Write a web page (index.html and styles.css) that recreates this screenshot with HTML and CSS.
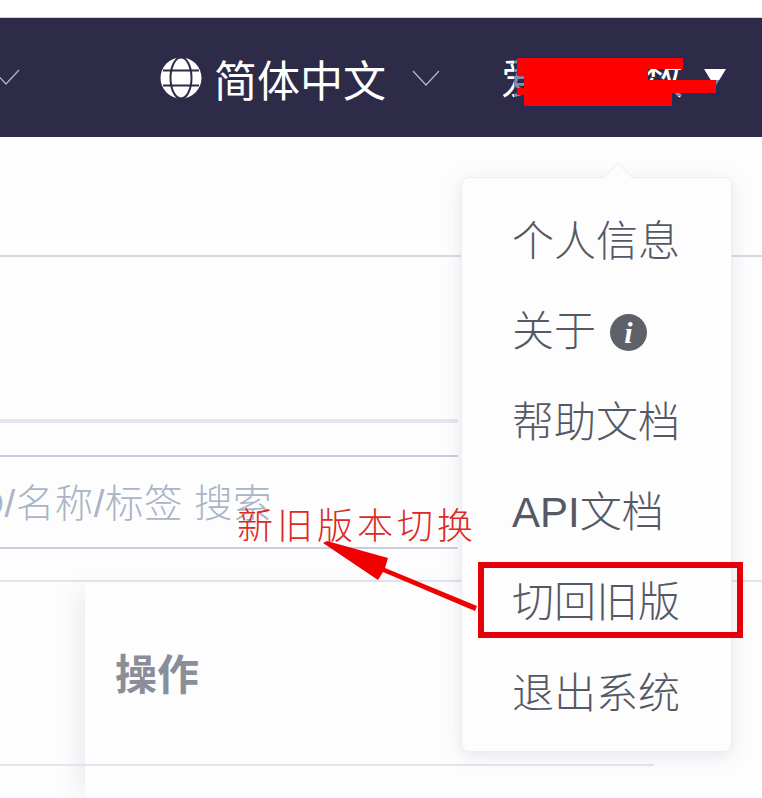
FILE: index.html
```html
<!DOCTYPE html>
<html lang="zh-CN">
<head>
<meta charset="utf-8">
<title>切回旧版</title>
<link rel="stylesheet" href="styles.css">
</head>
<body>
<div class="page">
  <div class="topstrip"></div>
  <header class="navbar">
    <svg class="chev chev-left" viewBox="0 0 28 16"><path d="M1 1 L14 15 L27 1"/></svg>
    <div class="lang">
      <svg class="globe" viewBox="0 0 42 42">
        <circle cx="21" cy="21" r="20.5" fill="#fff"/>
        <g fill="none" stroke="#2d2b47" stroke-width="2">
          <ellipse cx="21" cy="21" rx="10.5" ry="20.5"/>
          <path d="M3 13.5 H39 M3 28.5 H39"/>
        </g>
      </svg>
      <span class="lang-text">简体中文</span>
      <svg class="chev" viewBox="0 0 28 16"><path d="M1 1 L14 15 L27 1"/></svg>
    </div>
    <div class="user">
      <span class="user-name"><span>爱</span><span>数</span></span>
      <span class="caret"></span>
    </div>
  </header>
  <main class="content">
    <div class="rule rule-a"></div>
    <div class="band"></div>
    <div class="search"><span class="placeholder">ID/名称/标签 搜索</span></div>
    <div class="table-top"></div>
    <div class="fixed-col">
      <div class="op-head">操作</div>
      <div class="op-line"></div>
    </div>
    <div class="vline"></div>
  </main>

  <div class="menu">
    <span class="menu-arrow"></span>
    <div class="menu-item">个人信息</div>
    <div class="menu-item">关于<span class="info">i</span></div>
    <div class="menu-item">帮助文档</div>
    <div class="menu-item">API文档</div>
    <div class="menu-item">切回旧版</div>
    <div class="menu-item">退出系统</div>
  </div>

  <svg class="redact" viewBox="0 0 762 798">
    <path fill="#1f2a63" opacity=".55" d="M514 55 H686 V69 H648 V80 H686 H720 V96 H675 V109 H521 V98 H514 Z"/>
    <path fill="#fe0000" d="M517 58 H683 V69 H648 V80 L680 80 H716 V93 H672 V106 H524 V95 H517 V88 H524 V76 H517 Z"/>
  </svg>
  <div class="note">新旧版本切换</div>
  <svg class="arrow" viewBox="0 0 762 798">
    <path fill="#f00000" d="M323 543 L327 541 L388 558 L385 568 L477 606 L475 611 L383 572 L378 580 Z"/>
  </svg>
  <div class="highlight"></div>
</div>
</body>
</html>
```
FILE: styles.css
```css
* { box-sizing: border-box; }
html, body { margin: 0; padding: 0; }
body {
  width: 762px;
  height: 798px;
  overflow: hidden;
  background: #fdfdfe;
  font-family: "Liberation Sans", "Noto Sans CJK SC", sans-serif;
}
.page { position: relative; width: 762px; height: 798px; overflow: hidden; }

.topstrip { height: 18px; background: #fff; border-bottom: 1px solid #d4d4d8; }

.navbar {
  height: 119px;
  background: #2d2b47;
  display: flex;
  align-items: center;
  color: #fff;
}
.chev { width: 28px; height: 16px; flex: none; }
.chev path { fill: none; stroke: #b9b8c4; stroke-width: 1.2; }
.chev-left { margin-left: -8px; margin-top: -2px; }
.lang { display: flex; align-items: center; margin-left: 140px; }
.globe { width: 42px; height: 42px; flex: none; }
.lang-text { font-size: 43px; line-height: 60px; margin: 8px 26px 0 12px; white-space: nowrap; }
.user { display: flex; align-items: center; margin-left: 61px; }
.user-name {
  font-size: 42px;
  line-height: 60px;
  width: 182px;
  margin-right: 20px;
  display: flex;
  justify-content: space-between;
  margin-top: 4px;
}
.caret {
  width: 0; height: 0;
  border-left: 11px solid transparent;
  border-right: 11px solid transparent;
  border-top: 18px solid #fff;
  margin-top: 1px;
  margin-left: 1px;
}

.content { position: relative; height: 661px; }
.rule-a { height: 2px; margin-top: 118px; background: #d6d9e2; }
.band { width: 458px; height: 4px; margin-top: 162px; background: #e1e6f0; }
.search {
  width: 458px;
  height: 94px;
  margin-top: 32px;
  border-top: 2px solid #c5cfe0;
  border-bottom: 2px solid #c5cfe0;
  display: flex;
  align-items: center;
  overflow: hidden;
}
.placeholder {
  font-size: 38.5px;
  letter-spacing: .5px;
  font-weight: 300;
  line-height: 50px;
  color: #aab4c6;
  white-space: nowrap;
  margin-left: -35px;
  margin-top: 4px;
}
.table-top { height: 2px; margin-top: 31px; background: #e3e6ed; }
.fixed-col {
  margin-left: 85px;
  height: 220px;
  background: #fdfdfe;
  box-shadow: -14px 0 22px -8px rgba(120, 125, 150, .14);
  padding-top: 66px;
}
.op-head { font-size: 42px; line-height: 56px; font-weight: 700; color: #8a8e98; margin-left: 30px; }
.op-line { height: 2px; margin-top: 60px; margin-left: -85px; background: #e2e5ec; width: 654px; }
.vline { position: absolute; left: 718px; top: 618px; width: 2px; height: 44px; background: #d4dae6; }

.menu {
  position: absolute;
  left: 461px;
  top: 177px;
  width: 271px;
  height: 575px;
  padding: 19px 0 0 50px;
  background: #fdfdfe;
  border-radius: 8px;
  border: 1px solid #eceef3;
  box-shadow: 0 4px 18px rgba(110, 115, 140, .16);
}
.menu-arrow {
  position: absolute;
  left: 145px;
  top: -11px;
  width: 22px;
  height: 22px;
  background: #fdfdfe;
  transform: rotate(45deg);
  border-left: 1px solid #eceef3;
  border-top: 1px solid #eceef3;
}
.menu-item {
  position: relative;
  height: 90.3px;
  display: flex;
  align-items: center;
  font-size: 42px;
  font-weight: 300;
  line-height: 60px;
  color: #555965;
  white-space: nowrap;
}
.info {
  width: 37px;
  height: 37px;
  margin-left: 14px;
  border-radius: 50%;
  background: #5f6168;
  color: #fff;
  display: flex;
  align-items: center;
  justify-content: center;
  font-family: "Liberation Serif", serif;
  font-style: italic;
  font-weight: 700;
  font-size: 30px;
  line-height: 37px;
}

.redact, .arrow { position: absolute; left: 0; top: 0; width: 762px; height: 798px; pointer-events: none; }
.note {
  position: absolute;
  left: 237px;
  top: 501px;
  font-size: 36px;
  line-height: 52px;
  letter-spacing: 4px;
  font-weight: 300;
  color: #dc2a24;
  white-space: nowrap;
}
.highlight {
  position: absolute;
  left: 478px;
  top: 562px;
  width: 265px;
  height: 76px;
  border: 6px solid #e60008;
}
```
